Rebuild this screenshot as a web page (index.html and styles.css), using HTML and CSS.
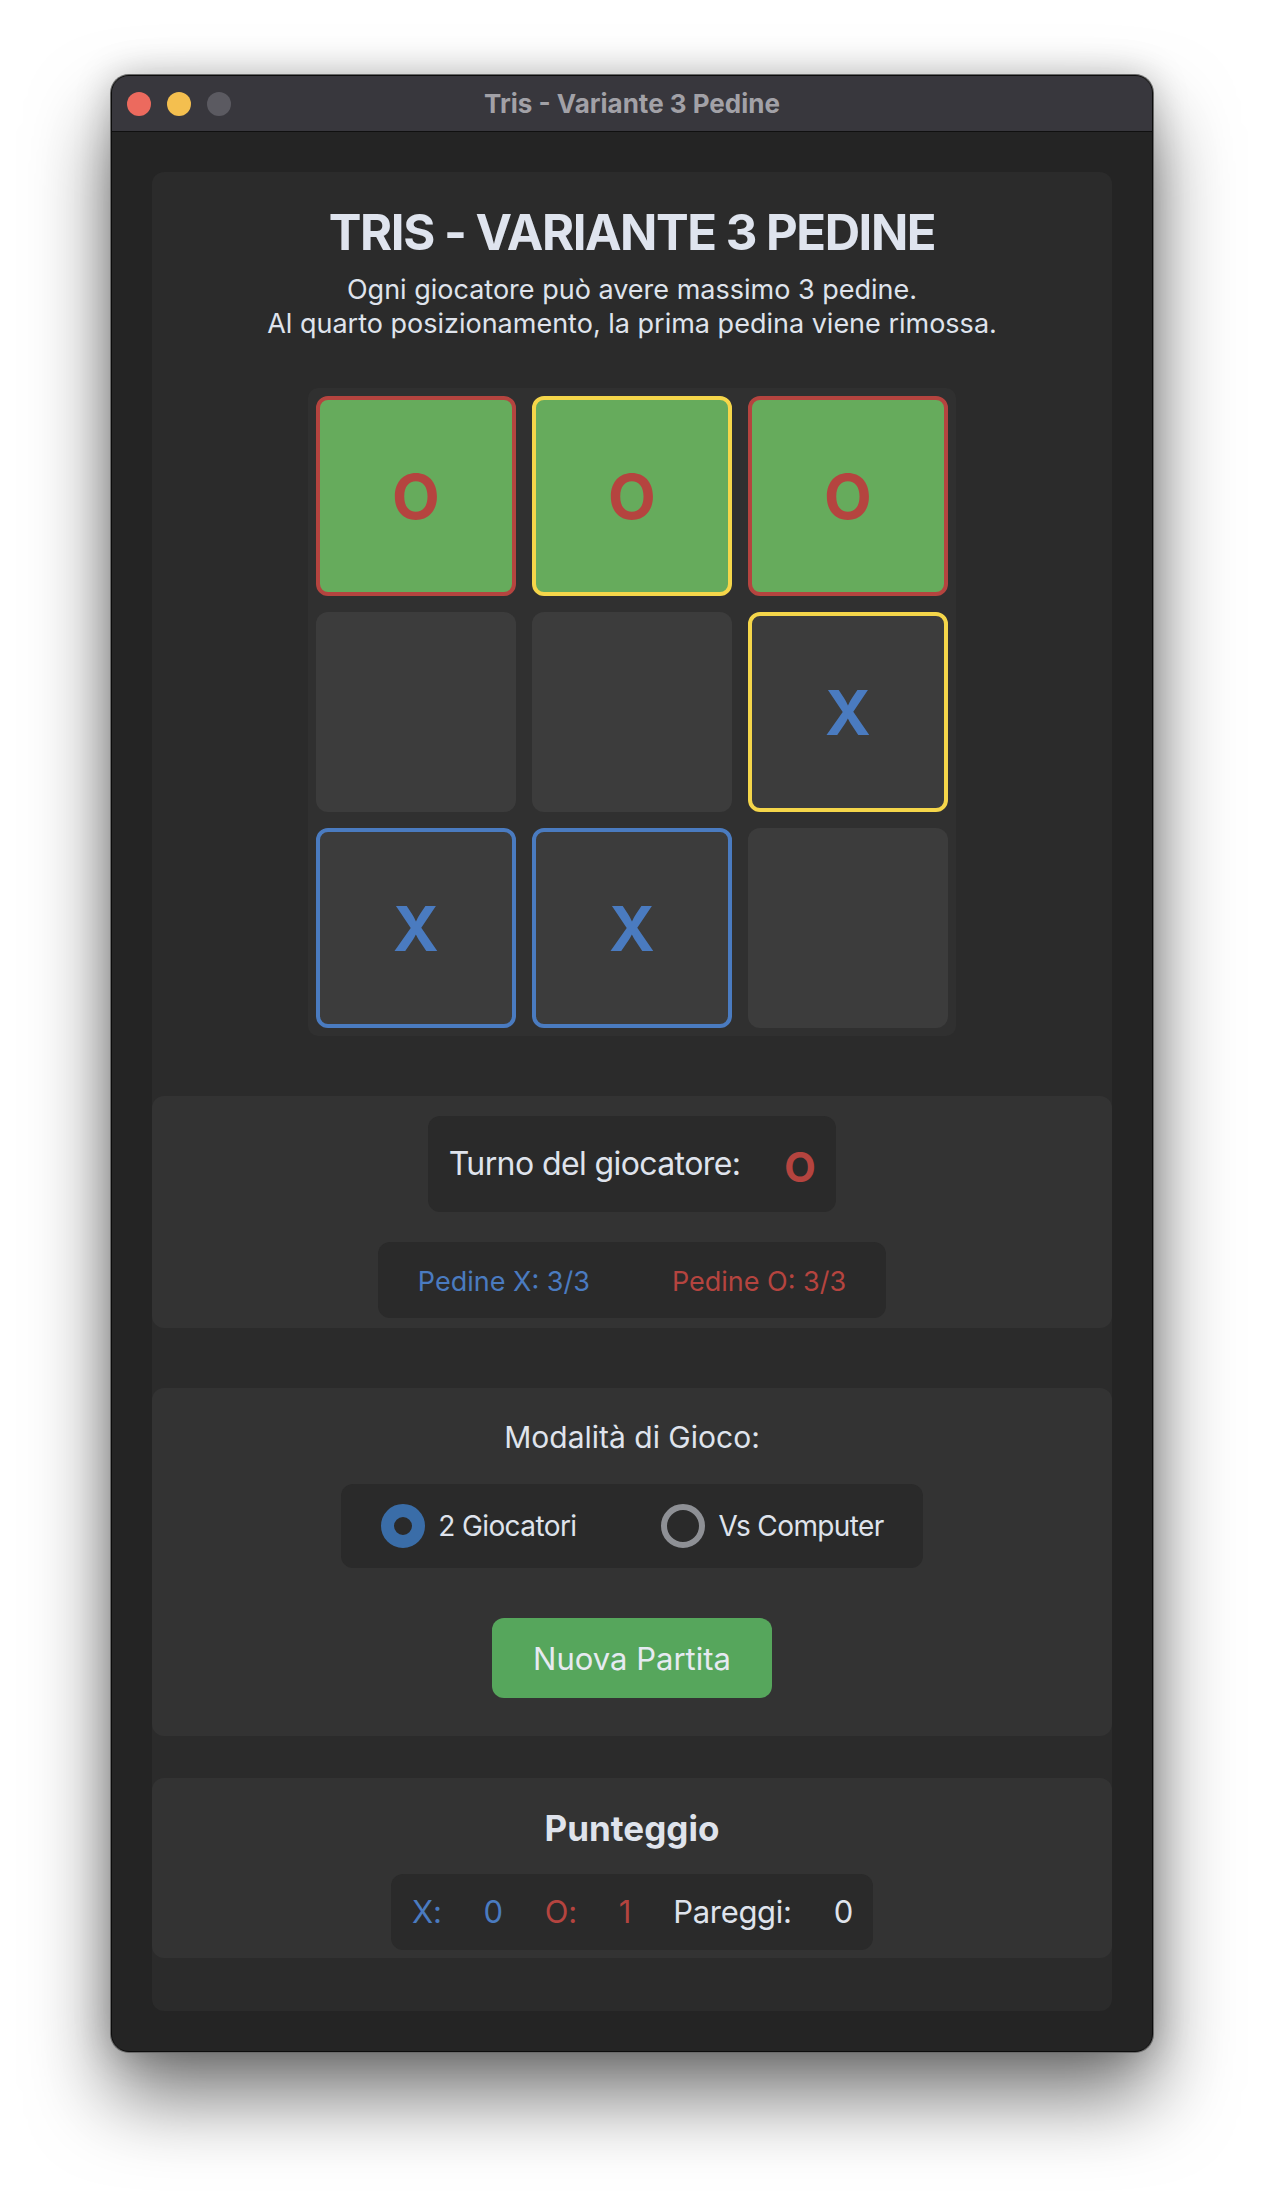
FILE: index.html
```html
<!DOCTYPE html>
<html lang="it">
<head>
  <meta charset="UTF-8">
  <meta name="viewport" content="width=device-width, initial-scale=1.0">
  <title>Tris - Variante 3 Pedine</title>
  <link rel="stylesheet" href="styles.css">
</head>
<body>
  <div class="window">
    <div class="titlebar">
      <div class="lights">
        <span class="light close"></span>
        <span class="light minimize"></span>
        <span class="light zoom"></span>
      </div>
      <div class="window-title">Tris - Variante 3 Pedine</div>
      <div></div>
    </div>

    <div class="content">
      <div class="game">
        <header>
          <h1>TRIS - VARIANTE 3 PEDINE</h1>
          <p class="rules">Ogni giocatore può avere massimo 3 pedine.<br>Al quarto posizionamento, la prima pedina viene rimossa.</p>
        </header>

        <div class="board">
          <div class="cell o win">O</div>
          <div class="cell o win oldest">O</div>
          <div class="cell o win">O</div>
          <div class="cell"></div>
          <div class="cell"></div>
          <div class="cell x oldest">X</div>
          <div class="cell x">X</div>
          <div class="cell x">X</div>
          <div class="cell"></div>
        </div>

        <section class="panel status">
          <div class="turn">
            <span>Turno del giocatore:</span>
            <span class="turn-mark">O</span>
          </div>
          <div class="pieces">
            <span class="blue">Pedine X: 3/3</span>
            <span class="red">Pedine O: 3/3</span>
          </div>
        </section>

        <section class="panel mode">
          <h3>Modalità di Gioco:</h3>
          <div class="options">
            <label class="option"><span class="radio checked"></span>2 Giocatori</label>
            <label class="option"><span class="radio"></span>Vs Computer</label>
          </div>
          <button class="new-game">Nuova Partita</button>
        </section>

        <section class="panel score">
          <h2>Punteggio</h2>
          <div class="score-row">
            <span class="blue">X:</span>
            <span class="blue">0</span>
            <span class="red">O:</span>
            <span class="red">1</span>
            <span>Pareggi:</span>
            <span>0</span>
          </div>
        </section>
      </div>
    </div>
  </div>
</body>
</html>
```

FILE: styles.css
```css
body {
  margin: 0;
  padding-top: 75px;
  min-height: 2200px;
  box-sizing: border-box;
  background: #ffffff;
  font-family: Inter, 'Noto Sans', sans-serif;
  color: #dfe3ec;
}
.window {
  width: 1040px;
  margin: 0 auto;
  border: 1px solid #0c0c0c;
  border-radius: 18px;
  overflow: hidden;
  background: #242424;
  box-shadow: 0 0 0 1px #6a6a6a, 0 44px 80px rgba(0, 0, 0, 0.55), 0 0 36px rgba(0, 0, 0, 0.22);
}
.titlebar {
  height: 55px;
  display: grid;
  grid-template-columns: 1fr auto 1fr;
  align-items: center;
  background: #38373d;
  border-bottom: 1px solid #101010;
}
.lights {
  display: flex;
  gap: 16px;
  padding-left: 15px;
}
.light {
  width: 24px;
  height: 24px;
  border-radius: 50%;
}
.close { background: #ec6a5e; }
.minimize { background: #f4bf4f; }
.zoom { background: #5b5a61; }
.window-title {
  font-size: 26px;
  font-weight: 700;
  color: #a2a1a7;
}
.content {
  padding: 40px;
}
.game {
  background: #2b2b2b;
  border-radius: 12px;
  padding: 31px 0 53px;
}
header {
  text-align: center;
}
h1 {
  margin: 0;
  font-size: 49px;
  line-height: 60px;
  font-weight: 700;
  letter-spacing: -1.45px;
  color: #dfe4ee;
}
.rules {
  margin: 10px 0 0;
  font-size: 27px;
  line-height: 34px;
}
.board {
  width: 648px;
  box-sizing: border-box;
  margin: 47px auto 0;
  padding: 8px;
  display: grid;
  grid-template-columns: repeat(3, 200px);
  grid-auto-rows: 200px;
  gap: 16px;
  background: #303030;
  border-radius: 10px;
}
.cell {
  box-sizing: border-box;
  display: flex;
  align-items: center;
  justify-content: center;
  background: #3c3c3c;
  border: 4px solid transparent;
  border-radius: 12px;
  font-size: 62px;
  font-weight: 700;
}
.cell.o {
  color: #b5443f;
  border-color: #b5443f;
}
.cell.x {
  color: #4a7bc0;
  border-color: #4a7bc0;
}
.cell.win {
  background: #66ab5c;
}
.cell.oldest {
  border-color: #f5d64a;
}
.panel {
  background: #333333;
  border-radius: 12px;
  display: flex;
  flex-direction: column;
  align-items: center;
}
.status {
  margin-top: 60px;
  padding: 20px 0 10px;
}
.turn {
  box-sizing: border-box;
  height: 96px;
  display: flex;
  align-items: center;
  gap: 44px;
  padding: 0 21px;
  background: #2a2a2a;
  border-radius: 12px;
  font-size: 32px;
  line-height: 40px;
  letter-spacing: -0.6px;
}
.turn-mark {
  padding-top: 5px;
  font-size: 41px;
  font-weight: 700;
  color: #b5443f;
}
.pieces {
  box-sizing: border-box;
  height: 76px;
  margin-top: 30px;
  display: flex;
  gap: 82px;
  padding: 24px 40px 0;
  background: #2a2a2a;
  border-radius: 12px;
  font-size: 27px;
  line-height: 32px;
}
.blue { color: #4a7bc0; }
.red { color: #b5443f; }
.mode {
  margin-top: 60px;
  padding: 31px 0 38px;
}
.mode h3 {
  margin: 0;
  font-size: 30px;
  line-height: 36px;
  font-weight: 400;
}
.options {
  box-sizing: border-box;
  height: 84px;
  margin-top: 29px;
  display: flex;
  align-items: center;
  gap: 85px;
  padding: 0 39px 0 40px;
  background: #2a2a2a;
  border-radius: 12px;
}
.option {
  display: flex;
  align-items: center;
  gap: 13px;
  font-size: 28px;
  letter-spacing: -0.6px;
}
.radio {
  box-sizing: border-box;
  width: 44px;
  height: 44px;
  border-radius: 50%;
  border: 6px solid #8e9095;
}
.radio.checked {
  border: 13px solid #3a6da8;
  background: #2a2a2a;
}
.new-game {
  box-sizing: border-box;
  height: 80px;
  margin-top: 50px;
  padding: 0 41px;
  background: #56a65c;
  border: none;
  border-radius: 12px;
  color: #e6eaf1;
  font-family: inherit;
  font-size: 31px;
  cursor: pointer;
}
.score {
  margin-top: 42px;
  padding: 30px 0 8px;
}
.score h2 {
  margin: 0;
  font-size: 35px;
  line-height: 40px;
  font-weight: 700;
}
.score-row {
  box-sizing: border-box;
  height: 76px;
  margin-top: 26px;
  display: flex;
  gap: 42px;
  padding: 19px 20px 0 21px;
  background: #2a2a2a;
  border-radius: 12px;
  font-size: 31px;
  line-height: 38px;
  letter-spacing: -0.3px;
}
```
